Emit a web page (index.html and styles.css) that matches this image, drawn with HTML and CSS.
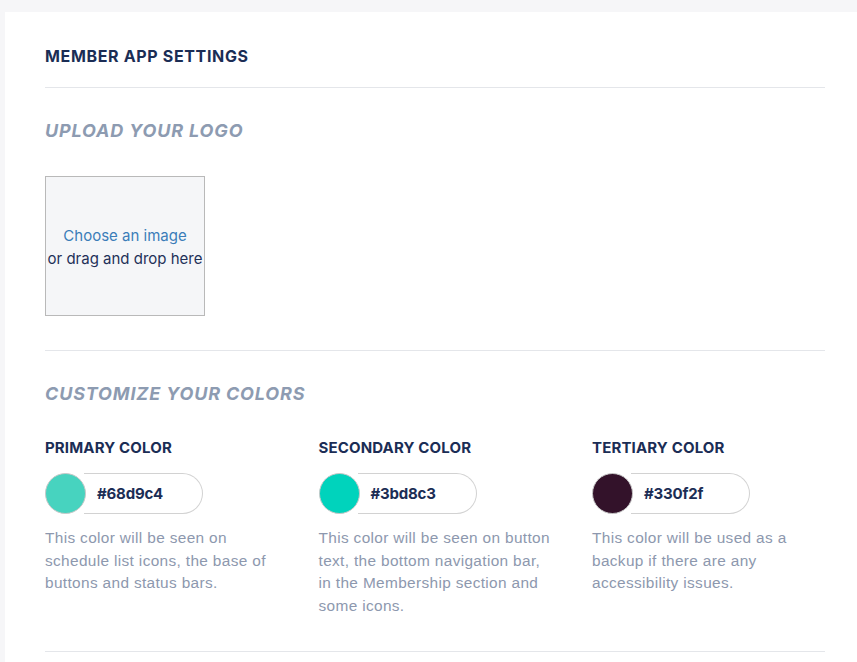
FILE: index.html
```html
<!DOCTYPE html>
<html>
<head>
<meta charset="utf-8">
<link rel="stylesheet" href="styles.css">
</head>
<body>
<div class="card">
  <header class="card-header">
    <h1 class="title">MEMBER APP SETTINGS</h1>
  </header>
  <section class="section">
    <h2 class="section-title">UPLOAD YOUR LOGO</h2>
    <div class="dropzone">
      <span class="dz-link">Choose an image</span>
      <span class="dz-text">or drag and drop here</span>
    </div>
  </section>
  <section class="section">
    <h2 class="section-title">CUSTOMIZE YOUR COLORS</h2>
    <div class="colors">
      <div class="color-col">
        <h3 class="color-label">PRIMARY COLOR</h3>
        <div class="picker">
          <span class="swatch" style="background:#47d3bf"></span>
          <span class="hex">#68d9c4</span>
        </div>
        <p class="desc">This color will be seen on schedule list icons, the base of buttons and status bars.</p>
      </div>
      <div class="color-col">
        <h3 class="color-label">SECONDARY COLOR</h3>
        <div class="picker">
          <span class="swatch" style="background:#00d3bc"></span>
          <span class="hex">#3bd8c3</span>
        </div>
        <p class="desc">This color will be seen on button text, the bottom navigation bar, in the Membership section and some icons.</p>
      </div>
      <div class="color-col">
        <h3 class="color-label">TERTIARY COLOR</h3>
        <div class="picker">
          <span class="swatch" style="background:#33122a"></span>
          <span class="hex">#330f2f</span>
        </div>
        <p class="desc">This color will be used as a backup if there are any accessibility issues.</p>
      </div>
    </div>
  </section>
  <div class="section end"></div>
</div>
</body>
</html>
```

FILE: styles.css
```css
* { box-sizing: border-box; }
html, body {
  margin: 0;
  padding: 0;
  background: #f6f6f8;
  overflow: hidden;
  height: 100%;
}
body {
  font-family: Inter, Lato, "Liberation Sans", sans-serif;
  color: #1b2d55;
}
.card {
  margin: 12px 0 0 5px;
  width: 860px;
  min-height: 700px;
  background: #ffffff;
  padding: 0 40px;
}
.card-header {
  padding: 34px 0 21px;
  border-bottom: 1px solid #e4e6ea;
}
.title {
  margin: 0;
  font-size: 16px;
  line-height: 20px;
  font-weight: 700;
  letter-spacing: 0.65px;
  color: #1b2d55;
}
.section {
  padding: 32px 0 34px;
  border-bottom: 1px solid #e4e6ea;
}
.section.end { border: 0; padding: 0; }
.section-title {
  margin: 0 0 34px;
  font-size: 18px;
  line-height: 22px;
  font-weight: 700;
  font-style: italic;
  letter-spacing: 0.85px;
  color: #8d9bb1;
}
.dropzone {
  width: 160px;
  height: 140px;
  background: #f5f6f8;
  border: 1px solid #b9b9b9;
  display: flex;
  flex-direction: column;
  align-items: center;
  justify-content: center;
  font-size: 15px;
  line-height: 23px;
  padding-top: 2px;
}
.dz-link { color: #3b7db8; }
.dz-text { color: #1f3158; white-space: nowrap; }
.colors {
  display: grid;
  grid-template-columns: repeat(3, 273.5px);
  margin-top: -1px;
}
.color-label {
  margin: 0 0 15px;
  font-size: 15px;
  line-height: 20px;
  font-weight: 700;
  letter-spacing: 0.15px;
  color: #1b2d55;
}
.picker {
  display: flex;
  align-items: center;
  width: 158px;
  height: 41px;
}
.swatch {
  flex: none;
  width: 41px;
  height: 41px;
  border-radius: 50%;
  border: 1px solid #c8c8c8;
  position: relative;
  z-index: 1;
}
.hex {
  flex: 1;
  height: 41px;
  margin-left: -2px;
  border: 1px solid #d2d2d2;
  border-left: 0;
  border-radius: 0 21px 21px 0;
  display: flex;
  align-items: center;
  padding-left: 13px;
  font-size: 15px;
  font-weight: 700;
  letter-spacing: -0.2px;
  color: #1b2d55;
}
.desc {
  margin: 13px 0 0;
  max-width: 238px;
  font-family: "Liberation Sans", Arial, sans-serif;
  font-size: 15.4px;
  letter-spacing: 0.35px;
  line-height: 22.6px;
  color: #8d98ae;
}
```
